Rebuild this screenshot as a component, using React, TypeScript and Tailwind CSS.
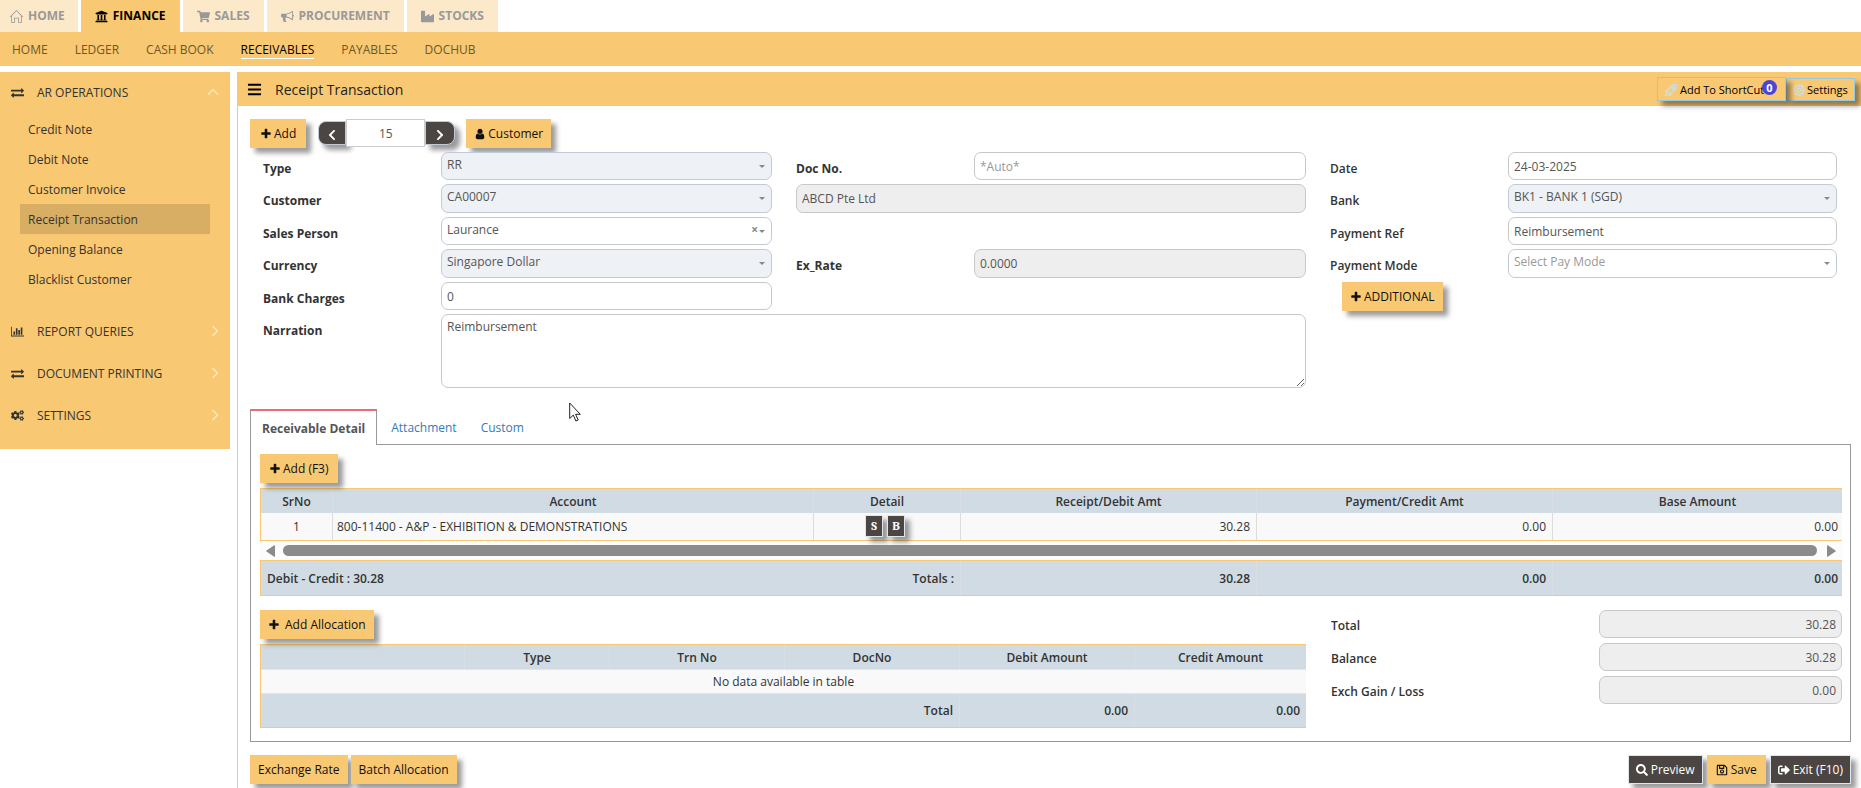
import React, { useState } from "react";
import {
  FaBars,
  FaChevronLeft,
  FaChevronRight,
  FaCogs,
  FaIndustry,
  FaRegSave,
  FaSearch,
  FaShoppingCart,
  FaSignOutAlt,
  FaUniversity,
} from "react-icons/fa";
import { SlHome, SlRocket, SlSettings } from "react-icons/sl";

type IconProps = { className?: string };

function glyph(path: string, viewBox = "0 0 1792 1792") {
  return function Glyph({ className = "size-3" }: IconProps) {
    return (
      <svg viewBox={viewBox} fill="currentColor" className={className} aria-hidden="true">
        <path d={path} />
      </svg>
    );
  };
}

const Plus = glyph(
  "M1600 736v192q0 40-28 68t-68 28h-416v416q0 40-28 68t-68 28h-192q-40 0-68-28t-28-68v-416h-416q-40 0-68-28t-28-68v-192q0-40 28-68t68-28h416v-416q0-40 28-68t68-28h192q40 0 68 28t28 68v416h416q40 0 68 28t28 68z"
);
const Exchange = glyph(
  "M1792 1184v192q0 13-9.5 22.5t-22.5 9.5h-1376v192q0 13-9.5 22.5t-22.5 9.5q-12 0-24-10l-319-320q-9-9-9-22 0-14 9-23l320-320q9-9 23-9 13 0 22.5 9.5t9.5 22.5v192h1376q13 0 22.5 9.5t9.5 22.5zM1792 640q0 14-9 23l-320 320q-9 9-23 9-13 0-22.5-9.5t-9.5-22.5v-192h-1376q-13 0-22.5-9.5t-9.5-22.5v-192q0-13 9.5-22.5t22.5-9.5h1376v-192q0-14 9-23t23-9q12 0 24 10l319 319q9 9 9 23z"
);
const Bullhorn = glyph(
  "M1664 640q53 0 90.5 37.5t37.5 90.5-37.5 90.5-90.5 37.5v384q0 52-38 90t-90 38q-417-347-812-380-58 19-91 66t-31 100.5 40 92.5q-20 33-23 65.5t6 58 33.5 55 48 50 61.5 50.5q-29 58-111.5 83t-168.5 11.5-132-55.5q-7-23-29.5-87.5t-32-94.5-23-89-15-101 3.5-98.5 22-110.5h-122q-66 0-113-47t-47-113v-192q0-66 47-113t113-47h480q435 0 896-384 52 0 90 38t38 90v384zm-128 604v-954q-394 302-768 343v270q377 42 768 341z"
);
const User = glyph(
  "M1536 1399q0 109-62.5 187t-150.5 78h-854q-88 0-150.5-78t-62.5-187q0-85 8.5-160.5t31.5-152 58.5-131 94-89 134.5-34.5q131 128 313 128t313-128q76 0 134.5 34.5t94 89 58.5 131 31.5 152 8.5 160.5zm-256-887q0 159-112.5 271.5t-271.5 112.5-271.5-112.5-112.5-271.5 112.5-271.5 271.5-112.5 271.5 112.5 112.5 271.5z"
);
const BarChart = glyph(
  "M640 896v512h-256v-512h256zm384-512v1024h-256v-1024h256zm1024 1152v128h-2048v-1536h128v1408h1920zm-640-896v768h-256v-768h256zm384-384v1152h-256v-1152h256z",
  "0 0 2048 1792"
);

const modules = [
  { name: "HOME", icon: SlHome },
  { name: "FINANCE", icon: FaUniversity },
  { name: "SALES", icon: FaShoppingCart },
  { name: "PROCUREMENT", icon: Bullhorn },
  { name: "STOCKS", icon: FaIndustry },
];

const sections = ["HOME", "LEDGER", "CASH BOOK", "RECEIVABLES", "PAYABLES", "DOCHUB"];

const operations = [
  "Credit Note",
  "Debit Note",
  "Customer Invoice",
  "Receipt Transaction",
  "Opening Balance",
  "Blacklist Customer",
];

const groups = [
  { name: "REPORT QUERIES", icon: BarChart },
  { name: "DOCUMENT PRINTING", icon: Exchange },
  { name: "SETTINGS", icon: FaCogs },
];

const shadow = "shadow-[5px_5px_5px_rgba(0,0,0,0.4)]";

function Button({
  children,
  dark = false,
  className = "px-[10px]",
}: {
  children: React.ReactNode;
  dark?: boolean;
  className?: string;
}) {
  const tone = dark
    ? "h-[29px] border border-[#e1e5ec] bg-[#4b4544] text-white"
    : "h-[29px] bg-[#f9c872] text-[#111]";
  return (
    <button type="button" className={`flex shrink-0 items-center gap-[2px] whitespace-nowrap ${tone} ${shadow} ${className}`}>
      {children}
    </button>
  );
}

function Chevron({ up = false }: { up?: boolean }) {
  return (
    <svg viewBox="0 0 12 12" className="size-3" fill="none" stroke="#fdebcb" strokeWidth="1.2" aria-hidden="true">
      <path d={up ? "M1 8.5 6 3.5l5 5" : "M3.5 1l5 5-5 5"} />
    </svg>
  );
}

function Field({
  id,
  label,
  weight = "font-bold",
  className = "",
  children,
}: {
  id: string;
  label: string;
  weight?: string;
  className?: string;
  children: React.ReactNode;
}) {
  return (
    <div className={`mr-6 flex ${className}`}>
      <label htmlFor={id} className={`w-[178px] shrink-0 pt-[9px] leading-4 text-[#333] ${weight}`}>
        {label}
      </label>
      {children}
    </div>
  );
}

function TextInput({
  id,
  value,
  placeholder,
  readOnly = false,
  className = "",
  label,
}: {
  id: string;
  value?: string;
  placeholder?: string;
  readOnly?: boolean;
  className?: string;
  label?: string;
}) {
  return (
    <input
      id={id}
      aria-label={label}
      defaultValue={value}
      placeholder={placeholder}
      readOnly={readOnly}
      className={`h-full min-w-0 flex-1 rounded-[7px] border border-[#c8c8c8] px-[5px] text-[#555] outline-none placeholder:text-[#999] ${
        readOnly ? "bg-[#eeeeee]" : "bg-white"
      } ${className}`}
    />
  );
}

function Select({
  id,
  value,
  locked = false,
  clearable = false,
  muted = false,
}: {
  id: string;
  value: string;
  locked?: boolean;
  clearable?: boolean;
  muted?: boolean;
}) {
  return (
    <div className="relative h-full min-w-0 flex-1">
      <select
        id={id}
        disabled={locked}
        className={`h-full w-full appearance-none rounded-[7px] border border-[#c2cad8] px-[5px] pb-[3px] opacity-100 outline-none ${
          locked ? "bg-[#eef1f5]" : "bg-white"
        } ${muted ? "text-[#999]" : "text-[#555]"}`}
      >
        <option>{value}</option>
      </select>
      {clearable && (
        <button type="button" aria-label="Clear" className="absolute top-[5px] right-[14px] text-[12px] leading-4 font-bold text-[#888]">
          ×
        </button>
      )}
      <svg viewBox="0 0 6 3" className="pointer-events-none absolute top-[13px] right-[7px] h-[3px] w-[6px] fill-[#888]" aria-hidden="true">
        <path d="M0 0h6L3 3z" />
      </svg>
    </div>
  );
}

const headCell = "border-l border-[#d9dfe4] pt-px font-semibold first:border-l-0";
const detailCols = (
  <colgroup>
    <col className="w-[71px]" />
    <col />
    <col className="w-[147px]" />
    <col className="w-[296px]" />
    <col className="w-[296px]" />
    <col className="w-[290px]" />
  </colgroup>
);

function DetailTable() {
  return (
    <div className="mt-[5px]">
      <table className="w-full table-fixed border-separate border-spacing-0 border-y border-l border-[#f9c872]">
        {detailCols}
        <thead>
          <tr className="h-6 bg-[#d0dbe3]">
            {["SrNo", "Account", "Detail", "Receipt/Debit Amt", "Payment/Credit Amt", "Base Amount"].map((h) => (
              <th key={h} className={headCell}>
                {h}
              </th>
            ))}
          </tr>
        </thead>
        <tbody>
          <tr className="h-[27px] bg-[#f9f9f9]">
            <td className="text-center">1</td>
            <td className="border-l border-[#ddd] pl-1">800-11400 - A&amp;P - EXHIBITION &amp; DEMONSTRATIONS</td>
            <td className="border-l border-[#ddd] pr-1">
              <div className="flex justify-center gap-1 pb-px">
                {["S", "B"].map((k) => (
                  <button
                    key={k}
                    type="button"
                    className={`h-[22px] w-[18px] border border-[#e1e5ec] bg-[#4b4544] font-serif text-[12px] leading-4 font-bold text-white ${shadow}`}
                  >
                    {k}
                  </button>
                ))}
              </div>
            </td>
            <td className="border-l border-[#ddd] pr-[6px] text-right">30.28</td>
            <td className="border-l border-[#ddd] pr-[6px] text-right">0.00</td>
            <td className="border-l border-[#ddd] pr-1 text-right">0.00</td>
          </tr>
        </tbody>
      </table>
      <div className="flex h-[19px] items-center gap-2 bg-[#fcfcfc] px-[6px]" role="scrollbar" aria-controls="receipt-lines" aria-valuenow={0}>
        <svg viewBox="0 0 9 12" className="h-3 w-[9px] fill-[#8b8b8b]" aria-hidden="true">
          <path d="M9 .8v10.4q0 .8-.8.6L.5 6.5Q0 6 .5 5.5L8.200.200Q9 0 9 .8z" />
        </svg>
        <div className="h-[11px] flex-1 rounded-full bg-[#8b8b8b]" />
        <svg viewBox="0 0 9 12" className="ml-[2px] h-3 w-[9px] fill-[#8b8b8b]" aria-hidden="true">
          <path d="M0 .8v10.400q0 .8.8.6L8.500 6.500Q9 6 8.500 5.500L.8.200Q0 0 0 .8z" />
        </svg>
      </div>
      <table id="receipt-lines" className="w-full table-fixed border-separate border-spacing-0 border-y border-l border-[#f9c872] font-semibold">
        {detailCols}
        <tbody>
          <tr className="h-[34px] bg-[#d0dbe3]">
            <td colSpan={2} className="pt-[2px] pl-[6px]">
              Debit - Credit : 30.28
            </td>
            <td className="pt-[2px] pr-[6px] text-right">Totals :</td>
            <td className="border-l border-[#d9dfe4] pt-[2px] pr-[6px] text-right">30.28</td>
            <td className="border-l border-[#d9dfe4] pt-[2px] pr-[6px] text-right">0.00</td>
            <td className="border-l border-[#d9dfe4] pt-[2px] pr-1 text-right">0.00</td>
          </tr>
        </tbody>
      </table>
    </div>
  );
}

function AllocationTable() {
  return (
    <table className="mt-[5px] w-full table-fixed border-separate border-spacing-0 border-y border-l border-[#f9c872]">
      <colgroup>
        <col />
        <col className="w-[145px]" />
        <col className="w-[175px]" />
        <col className="w-[175px]" />
        <col className="w-[175px]" />
        <col className="w-[172px]" />
      </colgroup>
      <thead>
        <tr className="h-6 bg-[#d0dbe3]">
          {["", "Type", "Trn No", "DocNo", "Debit Amount", "Credit Amount"].map((h) => (
            <th key={h} className={headCell}>
              {h}
            </th>
          ))}
        </tr>
      </thead>
      <tbody>
        <tr className="h-[25px] bg-[#f9f9f9]">
          <td colSpan={6} className="border-y border-[#e3e7ea] text-center">
            No data available in table
          </td>
        </tr>
      </tbody>
      <tfoot className="font-semibold">
        <tr className="h-[33px] bg-[#d0dbe3]">
          <td colSpan={4} className="pr-[6px] text-right">
            Total
          </td>
          <td className="border-l border-[#d9dfe4] pr-[6px] text-right">0.00</td>
          <td className="border-l border-[#d9dfe4] pr-[6px] text-right">0.00</td>
        </tr>
      </tfoot>
    </table>
  );
}

function Sidebar({ active, onPick }: { active: string; onPick: (name: string) => void }) {
  return (
    <aside className="w-[230px] shrink-0 self-start bg-[#f9c872] pb-[13px] text-[#333]">
      <button type="button" className="flex h-10 w-full items-center pr-[11px] pl-[11px]">
        <Exchange className="size-[13px]" />
        <span className="ml-[13px] flex-1 pt-[2px] text-left">AR OPERATIONS</span>
        <Chevron up />
      </button>
      <ul className="mt-[2px] mb-4 px-5">
        {operations.map((name) => (
          <li key={name}>
            <a
              href="#"
              onClick={() => onPick(name)}
              className={`flex h-[30px] items-center pt-[2px] pl-2 ${name === active ? "bg-[#d8ae64]" : ""}`}
            >
              {name}
            </a>
          </li>
        ))}
      </ul>
      {groups.map(({ name, icon: Icon }) => (
        <button key={name} type="button" className="flex h-[42px] w-full items-center px-[9px] pl-[11px]">
          <Icon className="size-[13px]" />
          <span className="ml-[13px] flex-1 pt-[2px] text-left">{name}</span>
          <Chevron />
        </button>
      ))}
    </aside>
  );
}

export default function App() {
  const [operation, setOperation] = useState("Receipt Transaction");
  return (
    <div className="min-h-screen bg-white font-['Open_Sans','Noto_Sans',sans-serif] text-[12px] leading-4 text-[#333]">
      <nav className="flex h-8 gap-[3px]">
        {modules.map(({ name, icon: Icon }) => (
          <a
            key={name}
            href="#"
            className={`flex items-center gap-[5px] pr-[14px] pl-[14px] font-bold first:pr-[13px] first:pl-[10px] ${
              name === "FINANCE" ? "bg-[#f9c872] text-black" : "bg-[#fce9c9] text-[#999]"
            }`}
          >
            <Icon className="size-[13px]" />
            {name}
          </a>
        ))}
      </nav>
      <nav className="flex h-[34px] items-center gap-[27px] bg-[#f9c872] px-3 pt-[2px]">
        {sections.map((name) => (
          <a
            key={name}
            href="#"
            className={`border-b ${
              name === "RECEIVABLES" ? "border-white font-medium text-black" : "border-transparent text-[#6e5729]"
            }`}
          >
            {name}
          </a>
        ))}
      </nav>

      <div className="mt-[6px] flex gap-[7px]">
        <Sidebar active={operation} onPick={setOperation} />

        <main className="min-w-0 flex-1 border-l border-[#f9c872] pb-[5px]">
          <header className="flex h-[34px] items-center bg-[#f9c872] pr-[6px] pl-[9px]">
            <button type="button" aria-label="Menu">
              <FaBars className="size-[15px] text-black" />
            </button>
            <h1 className="ml-[13px] flex-1 pt-px text-[14px] leading-5 text-[#222]">Receipt Transaction</h1>
            <button
              type="button"
              className={`relative flex h-6 w-[129px] items-center gap-[3px] border border-[#97c8e4] bg-[#f9c872] pt-px pl-[7px] text-[11px] text-black ${shadow}`}
            >
              <SlRocket className="size-3 stroke-[#cbdfe8] stroke-[60px] text-[#cbdfe8]" />
              Add To ShortCut
              <span className="absolute top-[2px] right-[8px] flex size-[15px] items-center justify-center rounded-full bg-[#4b45d6] font-bold text-white">
                0
              </span>
            </button>
            <button
              type="button"
              className={`flex h-[23px] w-[69px] items-center gap-[2px] border border-[#97c8e4] bg-[#f9c872] pt-px pl-[6px] text-[11px] text-black ${shadow}`}
            >
              <SlSettings className="size-3 stroke-[#cbdfe8] stroke-[60px] text-[#cbdfe8]" />
              Settings
            </button>
          </header>

          <div className="flex pt-[13px] pl-3">
            <Button>
              <Plus />
              Add
            </Button>
            <div className="mr-[11px] ml-3 flex items-start">
              <button
                type="button"
                aria-label="Previous"
                className={`mt-[2px] flex h-6 w-7 items-center justify-center rounded-l-[8px] border border-[#c2cad8] bg-[#4b4544] pt-[3px] text-white ${shadow}`}
              >
                <FaChevronLeft className="size-3" />
              </button>
              <input
                aria-label="Record number"
                defaultValue="15"
                className="relative h-[28px] w-[79px] border border-[#ccc] bg-white text-center text-[#555] outline-none"
              />
              <button
                type="button"
                aria-label="Next"
                className={`mt-[2px] flex h-6 w-[30px] items-center justify-center rounded-r-[8px] border border-[#c2cad8] bg-[#4b4544] pt-[3px] text-white ${shadow}`}
              >
                <FaChevronRight className="size-3" />
              </button>
            </div>
            <Button className="px-2">
              <User />
              Customer
            </Button>
          </div>

          <form className="relative mt-1 grid grid-cols-[533fr_534fr_531fr] grid-rows-[28px_29px_28px_29px_28px_74px] gap-y-1 pl-[25px]">
            <Field id="type" label="Type">
              <Select id="type" value="RR" locked />
            </Field>
            <Field id="doc" label="Doc No.">
              <TextInput id="doc" placeholder="*Auto*" />
            </Field>
            <Field id="date" label="Date" weight="font-semibold">
              <TextInput id="date" value="24-03-2025" />
            </Field>

            <Field id="customer" label="Customer">
              <Select id="customer" value="CA00007" locked />
            </Field>
            <div className="mr-6 flex">
              <TextInput id="customer-name" label="Customer name" value="ABCD Pte Ltd" readOnly />
            </div>
            <Field id="bank" label="Bank" weight="font-semibold">
              <Select id="bank" value="BK1 - BANK 1 (SGD)" locked />
            </Field>

            <Field id="sales" label="Sales Person" className="col-start-1">
              <Select id="sales" value="Laurance" clearable />
            </Field>
            <Field id="payref" label="Payment Ref" weight="font-semibold" className="col-start-3">
              <TextInput id="payref" value="Reimbursement" />
            </Field>

            <Field id="currency" label="Currency">
              <Select id="currency" value="Singapore Dollar" locked />
            </Field>
            <Field id="rate" label="Ex_Rate">
              <TextInput id="rate" value="0.0000" readOnly />
            </Field>
            <Field id="paymode" label="Payment Mode" weight="font-semibold">
              <Select id="paymode" value="Select Pay Mode" muted />
            </Field>

            <Field id="charges" label="Bank Charges" className="col-start-1">
              <TextInput id="charges" value="0" />
            </Field>
            <div className="col-start-3 flex pl-3">
              <Button className="px-2">
                <Plus />
                ADDITIONAL
              </Button>
            </div>

            <Field id="narration" label="Narration" className="col-span-2">
              <textarea
                id="narration"
                defaultValue="Reimbursement"
                className="h-full flex-1 rounded-[7px] border border-[#c8c8c8] px-[5px] py-1 text-[#555] outline-none"
              />
            </Field>

            <svg viewBox="0 0 12 20" className="pointer-events-none absolute -bottom-[34px] left-[331px] h-5 w-3" fill="#fff" stroke="#222" aria-hidden="true">
              <path d="M.7 1v15.500l3.600-3.400 2.600 5.900 2.300-1-2.600-5.700h4.700z" />
            </svg>
          </form>

          <section className="mr-[10px] ml-3 pt-[21px]">
            <div className="flex">
              <button
                type="button"
                className="relative -mb-px h-9 border-x border-t-2 border-x-[#999] border-t-[#ef6a74] bg-white px-[11px] pt-[2px] font-bold text-[#555]"
              >
                Receivable Detail
              </button>
              <button type="button" className="ml-[14px] pt-[3px] text-[#337ab7]">
                Attachment
              </button>
              <button type="button" className="ml-6 pt-[3px] text-[#337ab7]">
                Custom
              </button>
            </div>
            <div className="border border-[#999] pt-[9px] pr-2 pb-[13px] pl-[9px]">
              <div className="flex">
                <Button className="px-[9px]">
                  <Plus />
                  Add (F3)
                </Button>
              </div>
              <DetailTable />
              <div className="mt-[14px] flex gap-[25px]">
                <div className="min-w-0 flex-1">
                  <div className="flex">
                    <Button className="px-2">
                      <Plus />
                      <span className="ml-[3px]">Add Allocation</span>
                    </Button>
                  </div>
                  <AllocationTable />
                </div>
                <div className="flex w-[511px] flex-col gap-[5px]">
                  {[
                    ["Total", "30.28"],
                    ["Balance", "30.28"],
                    ["Exch Gain / Loss", "0.00"],
                  ].map(([name, value]) => (
                    <div key={name} className="flex h-7">
                      <label htmlFor={name} className="w-[268px] shrink-0 pt-2 leading-4 font-semibold">
                        {name}
                      </label>
                      <TextInput id={name} value={value} readOnly className="text-right" />
                    </div>
                  ))}
                </div>
              </div>
            </div>
          </section>

          <footer className="mr-[10px] ml-3 flex items-center pt-[13px]">
            <Button className="px-2">Exchange Rate</Button>
            <Button className="ml-[3px] px-2">Batch Allocation</Button>
            <div className="ml-auto flex gap-1">
              <Button dark className="px-[7px]">
                <FaSearch className="mr-px size-3" />
                Preview
              </Button>
              <Button className="px-[9px]">
                <FaRegSave className="mr-px size-3" />
                Save
              </Button>
              <Button dark className="px-[7px]">
                <FaSignOutAlt className="mr-px size-3" />
                Exit (F10)
              </Button>
            </div>
          </footer>
        </main>
      </div>
    </div>
  );
}
